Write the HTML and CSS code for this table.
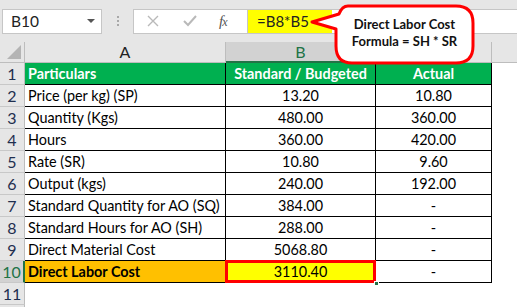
FILE: index.html
```html
<!DOCTYPE html>
<html>
<head>
<meta charset="utf-8">
<link rel="stylesheet" href="styles.css">
</head>
<body>
<div class="toolbar">
  <div class="namebox"><span class="nb-text">B10</span><span class="caret"></span></div>
  <div class="dots"><i></i><i></i><i></i></div>
  <div class="fbar">
    <div class="ficons">
      <svg class="ic-x" width="12" height="12" viewBox="0 0 12 12"><path d="M1 1 L11 11 M11 1 L1 11" stroke="#b9b9b9" stroke-width="1.4" fill="none"/></svg>
      <svg class="ic-check" width="14" height="12" viewBox="0 0 14 12"><path d="M1 6 L5 10 L13 1" stroke="#b9b9b9" stroke-width="2" fill="none"/></svg>
      <span class="fx">f<span class="fx-x">x</span></span>
    </div>
    <div class="formula">=B8*B5</div>
    <div class="frest"></div>
  </div>
</div>

<div class="sheet">
  <div class="corner"><span class="tri"></span></div>
  <div class="colhdr">A</div>
  <div class="colhdr sel">B</div>
  <div class="colhdr"></div>
  <div class="colhdr last"></div>

  <div class="rowhdr">1</div>
  <div class="c a head">Particulars</div>
  <div class="c b head">Standard / Budgeted</div>
  <div class="c cc head">Actual</div>
  <div class="e"></div>

  <div class="rowhdr">2</div>
  <div class="c a">Price (per kg) (SP)</div>
  <div class="c b">13.20</div>
  <div class="c cc">10.80</div>
  <div class="e"></div>

  <div class="rowhdr">3</div>
  <div class="c a">Quantity (Kgs)</div>
  <div class="c b">480.00</div>
  <div class="c cc">360.00</div>
  <div class="e"></div>

  <div class="rowhdr">4</div>
  <div class="c a">Hours</div>
  <div class="c b">360.00</div>
  <div class="c cc">420.00</div>
  <div class="e"></div>

  <div class="rowhdr">5</div>
  <div class="c a">Rate (SR)</div>
  <div class="c b">10.80</div>
  <div class="c cc">9.60</div>
  <div class="e"></div>

  <div class="rowhdr">6</div>
  <div class="c a">Output (kgs)</div>
  <div class="c b">240.00</div>
  <div class="c cc">192.00</div>
  <div class="e"></div>

  <div class="rowhdr">7</div>
  <div class="c a">Standard Quantity for AO (SQ)</div>
  <div class="c b">384.00</div>
  <div class="c cc">-</div>
  <div class="e"></div>

  <div class="rowhdr">8</div>
  <div class="c a">Standard Hours for AO (SH)</div>
  <div class="c b">288.00</div>
  <div class="c cc">-</div>
  <div class="e"></div>

  <div class="rowhdr">9</div>
  <div class="c a">Direct Material Cost</div>
  <div class="c b">5068.80</div>
  <div class="c cc">-</div>
  <div class="e"></div>

  <div class="rowhdr selrow">10</div>
  <div class="c a total">Direct Labor Cost</div>
  <div class="c b active">3110.40<span class="selbox"></span><span class="handle"></span></div>
  <div class="c cc">-</div>
  <div class="e"></div>

  <div class="rowhdr">11</div>
  <div class="blank"></div>
  <div class="blank"></div>
  <div class="blank"></div>
  <div class="e"></div>

  <div class="rowhdr stub"></div>
  <div class="blank"></div>
  <div class="blank"></div>
  <div class="blank"></div>
  <div class="e"></div>
</div>

<div class="callout">
  <svg class="bubble" width="170" height="64" viewBox="0 0 170 64">
    <path d="M42 2 H150 Q167 2 167 19 V42 Q167 59 150 59 H46 Q30 59 30 42 V25 L6 18 L33 10 Q36 2 42 2 Z" fill="#fff" stroke="#ff0000" stroke-width="3" stroke-linejoin="round"/>
  </svg>
  <div class="ctext">Direct Labor Cost<br>Formula = SH * SR</div>
</div>
</body>
</html>
```

FILE: styles.css
```css
* { box-sizing: border-box; }
html, body { margin: 0; padding: 0; }
body {
  width: 517px;
  height: 307px;
  overflow: hidden;
  background: #fff;
  font-family: Lato, "Open Sans", sans-serif;
  color: #000;
  position: relative;
}

.toolbar {
  height: 42px;
  background: #e6e6e6;
  display: flex;
  align-items: center;
  padding-left: 2px;
}
.namebox {
  width: 100px;
  height: 25px;
  background: #fff;
  border: 1px solid #c6c6c6;
  display: flex;
  align-items: center;
  justify-content: space-between;
  padding: 0 6px 0 8px;
}
.nb-text { font-size: 15.5px; color: #222; }
.caret {
  width: 0; height: 0;
  border-left: 4px solid transparent;
  border-right: 4px solid transparent;
  border-top: 4px solid #555;
}
.dots {
  width: 31px;
  display: flex;
  flex-direction: column;
  align-items: center;
  gap: 2px;
}
.dots i { width: 2px; height: 2px; background: #a8a8a8; display: block; }
.fbar {
  flex: 1;
  height: 25px;
  background: #fff;
  border: 1px solid #c6c6c6;
  border-right: none;
  display: flex;
}
.ficons {
  width: 113px;
  display: flex;
  align-items: center;
  padding-left: 13px;
}
.ic-x { margin-right: 24px; }
.ic-check { margin-right: 22px; }
.fx {
  font-family: "Liberation Serif", serif;
  font-style: italic;
  font-size: 15px;
  color: #555;
  letter-spacing: -1px;
}
.fx-x { font-size: 12px; }
.formula {
  width: 85px;
  background: #ffff00;
  border-left: 1px solid #c6c6c6;
  font-size: 15px;
  line-height: 23px;
  padding-left: 9px;
  color: #222;
}
.frest { flex: 1; }

.sheet {
  display: grid;
  grid-template-columns: 25px 201px 150px 116px 1fr;
  grid-template-rows: 21px repeat(11, 22px) 2px;
}
.corner {
  background: #e6e6e6;
  border-right: 1px solid #bdbdbd;
  border-bottom: 1px solid #bdbdbd;
  position: relative;
}
.tri {
  position: absolute;
  right: 3px;
  bottom: 3px;
  width: 0; height: 0;
  border-left: 14px solid transparent;
  border-bottom: 14px solid #b4b4b4;
}
.colhdr {
  background: #e6e6e6;
  border-right: 1px solid #bdbdbd;
  border-bottom: 1px solid #bdbdbd;
  text-align: center;
  font-size: 16px;
  line-height: 20px;
  color: #222;
}
.colhdr.sel {
  background: #d2d2d2;
  color: #217346;
  border-bottom: 2px solid #217346;
  border-right: 1px solid #9b9b9b;
}
.colhdr.last { border-right: none; }

.rowhdr {
  background: #e6e6e6;
  border-right: 1px solid #bdbdbd;
  border-bottom: 1px solid #c8c8c8;
  text-align: center;
  font-size: 16px;
  line-height: 21px;
  color: #1f2f4f;
}
.rowhdr.stub { border-bottom: none; }
.rowhdr.selrow {
  background: #d2d2d2;
  color: #217346;
  border-right: 2px solid #217346;
}

.c {
  border-right: 1px solid #000;
  border-bottom: 1px solid #000;
  font-size: 14.4px;
  line-height: 21px;
  white-space: nowrap;
}
.c.a { padding-left: 3px; }
.c.b, .c.cc { text-align: center; }
.head {
  background: #00b050;
  color: #fff;
  font-weight: bold;
}
.total {
  background: #ffc000;
  font-weight: bold;
}
.active {
  background: #ffff00;
  position: relative;
}
.selbox {
  position: absolute;
  left: -1px;
  top: -1px;
  right: -1px;
  bottom: -1px;
  border: 3px solid #ff0000;
}
.handle {
  position: absolute;
  right: -4px;
  bottom: -4px;
  width: 5px;
  height: 5px;
  background: #217346;
  border: 1px solid #fff;
}

.callout {
  position: absolute;
  left: 306px;
  top: 4px;
  width: 170px;
  height: 64px;
}
.bubble { position: absolute; left: 0; top: 0; }
.ctext {
  position: absolute;
  left: 30px;
  top: 12px;
  width: 137px;
  text-align: center;
  font-size: 13px;
  font-weight: bold;
  line-height: 17px;
  color: #111;
}
```
